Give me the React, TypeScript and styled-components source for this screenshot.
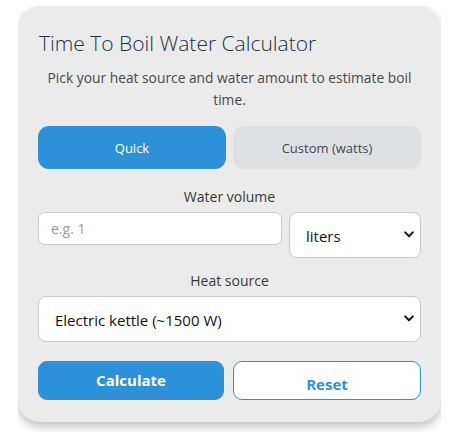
import React, { ReactElement, useState } from "react"
import styled, { createGlobalStyle } from "styled-components"

const GlobalStyle = createGlobalStyle`
  body {
    margin: 0;
    background: #ffffff;
    font-family: "Open Sans", "Noto Sans", sans-serif;
  }
`

const Frame = styled.div`
  margin: 6px 0 0 18px;
  width: 423px;
  overflow: hidden;
  padding-bottom: 14px;
`

const Card = styled.div`
  background: #eaebea;
  border-radius: 22px;
  box-shadow: 0 5px 10px rgba(0, 0, 0, 0.24);
  padding: 22px 20px 22px;
  display: flex;
  flex-direction: column;
`

const Title = styled.h1`
  margin: 0 0 0 1px;
  font-weight: 300;
  font-size: 21px;
  line-height: 30px;
  color: #1d3447;
`

const Subtitle = styled.p`
  margin: 9px 0 0;
  text-align: center;
  font-size: 13.8px;
  line-height: 22px;
  color: #4a4a4a;
`

const Tabs = styled.div`
  margin-top: 15px;
  display: grid;
  grid-template-columns: 1fr 1fr;
  gap: 7px;
`

const Tab = styled.button<{ $active?: boolean }>`
  height: 43px;
  border: none;
  border-radius: 11px;
  font-family: inherit;
  font-size: 13px;
  padding-top: 2px;
  background: ${(p) => (p.$active ? "#2c91d8" : "#dee1e4")};
  color: ${(p) => (p.$active ? "#ffffff" : "#444a52")};
  cursor: pointer;
`

const Label = styled.div<{ $gap: number }>`
  margin-top: ${(p) => p.$gap}px;
  text-align: center;
  font-size: 14px;
  line-height: 22px;
  color: #3a3a3a;
`

const Row = styled.div`
  margin-top: 4px;
  display: flex;
  gap: 7px;
  align-items: flex-start;
`

const Input = styled.input`
  flex: 1;
  min-width: 0;
  height: 33px;
  box-sizing: border-box;
  border: 1px solid #c8cacc;
  border-radius: 7px;
  padding: 0 12px;
  font-family: inherit;
  font-size: 14px;
  background: #fff;
  &::placeholder {
    color: #9a9a9a;
  }
`

const SelectBox = styled.div<{ $width?: string }>`
  position: relative;
  width: ${(p) => p.$width ?? "100%"};
`

const Select = styled.select`
  appearance: none;
  width: 100%;
  height: 46px;
  box-sizing: border-box;
  border: 1px solid #c8cacc;
  border-radius: 8px;
  padding: 2px 28px 0 16px;
  font-family: inherit;
  font-size: 15px;
  color: #111;
  background: #fff;
`

const Chevron = styled.svg`
  position: absolute;
  right: 7px;
  top: 50%;
  margin-top: -4px;
  width: 10px;
  height: 7px;
  pointer-events: none;
`

const Actions = styled.div`
  margin-top: 19px;
  display: grid;
  grid-template-columns: 186px 1fr;
  gap: 9px;
`

const ActionButton = styled.button<{ $primary?: boolean }>`
  height: 39px;
  box-sizing: border-box;
  border-radius: 9px;
  border: 1px solid #2c91d8;
  font-family: inherit;
  font-weight: 700;
  font-size: 15px;
  background: ${(p) => (p.$primary ? "#2c91d8" : "#ffffff")};
  color: ${(p) => (p.$primary ? "#ffffff" : "#2c91d8")};
  padding-top: ${(p) => (p.$primary ? "0" : "7px")};
  cursor: pointer;
`

function Arrow(): ReactElement {
  return (
    <Chevron viewBox="0 0 10 7">
      <path d="M1.2 1.4 L5 5.2 L8.8 1.4" fill="none" stroke="#111" strokeWidth="2" strokeLinecap="round" strokeLinejoin="round" />
    </Chevron>
  )
}

export default function App(): ReactElement {
  const [mode, setMode] = useState<"quick" | "custom">("quick")
  return (
    <>
      <GlobalStyle />
      <Frame>
        <Card>
          <Title>Time To Boil Water Calculator</Title>
          <Subtitle>
            Pick your heat source and water amount to estimate boil time.
          </Subtitle>
          <Tabs>
            <Tab $active={mode === "quick"} onClick={() => setMode("quick")}>
              Quick
            </Tab>
            <Tab $active={mode === "custom"} onClick={() => setMode("custom")}>
              Custom (watts)
            </Tab>
          </Tabs>
          <Label $gap={17}>Water volume</Label>
          <Row>
            <Input placeholder="e.g. 1" />
            <SelectBox $width="132px">
              <Select defaultValue="liters">
                <option value="liters">liters</option>
                <option value="cups">cups</option>
                <option value="ml">ml</option>
              </Select>
              <Arrow />
            </SelectBox>
          </Row>
          <Label $gap={12}>Heat source</Label>
          <Row>
            <SelectBox>
              <Select defaultValue="kettle">
                <option value="kettle">Electric kettle (~1500 W)</option>
                <option value="stove">Gas stove</option>
              </Select>
              <Arrow />
            </SelectBox>
          </Row>
          <Actions>
            <ActionButton $primary>Calculate</ActionButton>
            <ActionButton>Reset</ActionButton>
          </Actions>
        </Card>
      </Frame>
    </>
  )
}
